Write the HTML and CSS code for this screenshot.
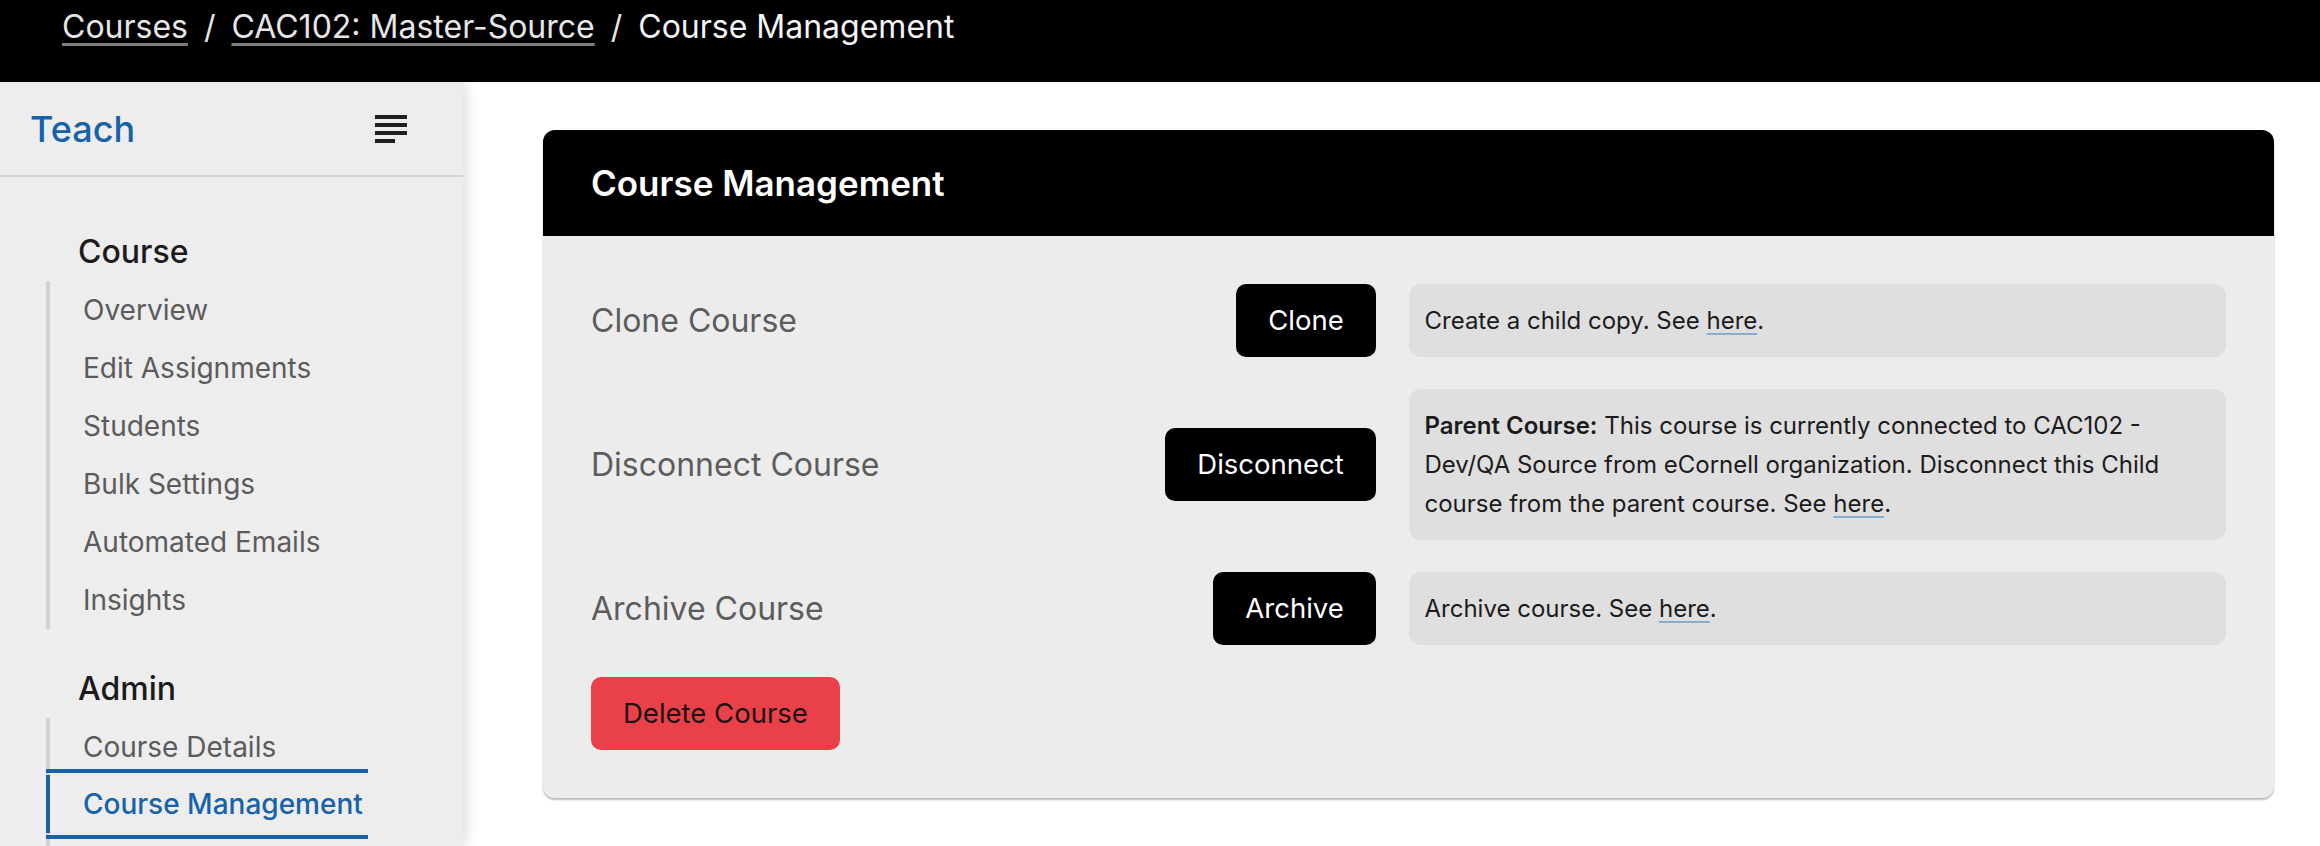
FILE: index.html
```html
<!DOCTYPE html>
<html lang="en">
<head>
<meta charset="utf-8">
<title>Course Management</title>
<link rel="stylesheet" href="styles.css">
</head>
<body>
<header class="topbar">
  <nav class="crumbs">
    <a href="#" class="crumb-link">Courses</a>
    <span class="sep">/</span>
    <a href="#" class="crumb-link">CAC102: Master-Source</a>
    <span class="sep">/</span>
    <span class="crumb-current">Course Management</span>
  </nav>
</header>
<div class="layout">
  <aside class="sidebar">
    <div class="side-head">
      <span class="brand">Teach</span>
      <button class="menu-btn" aria-label="Menu">
        <svg viewBox="0 0 24 24" width="48" height="48"><path fill="#1f1f1f" d="M14 17H4v2h10v-2zm6-8H4v2h16V9zM4 15h16v-2H4v2zM4 5v2h16V5H4z"/></svg>
      </button>
    </div>
    <nav class="side-nav">
      <section class="nav-group">
        <h3 class="nav-title">Course</h3>
        <ul class="nav-list">
          <li class="nav-item"><a href="#">Overview</a></li>
          <li class="nav-item"><a href="#">Edit Assignments</a></li>
          <li class="nav-item"><a href="#">Students</a></li>
          <li class="nav-item"><a href="#">Bulk Settings</a></li>
          <li class="nav-item"><a href="#">Automated Emails</a></li>
          <li class="nav-item"><a href="#">Insights</a></li>
        </ul>
      </section>
      <section class="nav-group">
        <h3 class="nav-title">Admin</h3>
        <ul class="nav-list nav-list-open">
          <li class="nav-item"><a href="#">Course Details</a></li>
          <li class="nav-item active"><a href="#">Course Management</a></li>
        </ul>
      </section>
    </nav>
  </aside>
  <main class="main">
    <div class="card">
      <div class="card-head">
        <h2 class="card-title">Course Management</h2>
      </div>
      <div class="card-body">
        <div class="row">
          <div class="row-main">
            <span class="row-label">Clone Course</span>
            <button class="btn btn-dark">Clone</button>
          </div>
          <div class="row-desc">Create a child copy. See <a href="#" class="help">here</a>.</div>
        </div>
        <div class="row">
          <div class="row-main">
            <span class="row-label">Disconnect Course</span>
            <button class="btn btn-dark">Disconnect</button>
          </div>
          <div class="row-desc"><strong>Parent Course:</strong> This course is currently connected to CAC102 - Dev/QA Source from eCornell organization. Disconnect this Child course from the parent course. See <a href="#" class="help">here</a>.</div>
        </div>
        <div class="row">
          <div class="row-main">
            <span class="row-label">Archive Course</span>
            <button class="btn btn-dark">Archive</button>
          </div>
          <div class="row-desc">Archive course. See <a href="#" class="help">here</a>.</div>
        </div>
        <div class="row-danger">
          <button class="btn btn-danger">Delete Course</button>
        </div>
      </div>
    </div>
  </main>
</div>
</body>
</html>
```

FILE: styles.css
```css
* { box-sizing: border-box; }
html, body { margin: 0; padding: 0; }
body {
  font-family: Inter, "Noto Sans", sans-serif;
  background: #ffffff;
  color: #1b1b1b;
  height: 846px;
  overflow: hidden;
}

.topbar {
  height: 82px;
  background: #000;
  padding: 9px 0 0 62px;
}
.crumbs {
  font-size: 32px;
  line-height: 36px;
  color: #f2f2f2;
  display: flex;
  align-items: baseline;
}
.crumb-link {
  color: #e6e6e6;
  text-decoration: underline;
  text-decoration-color: #7d7d7d;
  text-decoration-thickness: 2.5px;
  text-underline-offset: 5px;
}
.sep { margin: 0 16px; color: #e6e6e6; }
.crumb-current { color: #f5f5f5; }

.layout {
  display: flex;
  height: 764px;
  overflow: hidden;
}

.sidebar {
  width: 463px;
  flex: none;
  background: #ededed;
  box-shadow: 2px 0 14px rgba(0,0,0,0.16);
  position: relative;
  z-index: 1;
  overflow: hidden;
}
.side-head {
  height: 95px;
  border-bottom: 2px solid #d3d3d3;
  display: flex;
  align-items: center;
  justify-content: space-between;
  padding: 0 48px 0 30px;
}
.brand {
  font-size: 36px;
  font-weight: 500;
  color: #1762a8;
}
.menu-btn {
  border: 0;
  background: transparent;
  padding: 0;
  width: 48px;
  height: 48px;
  display: flex;
}

.side-nav { padding: 55px 0 0 46px; }
.nav-group + .nav-group { margin-top: 40px; }
.nav-title {
  margin: 0 0 9px 32px;
  font-size: 32px;
  line-height: 40px;
  font-weight: 500;
  color: #1b1b1b;
}
.nav-list {
  list-style: none;
  margin: 0;
  padding: 0;
  border-left: 4px solid #d2d2d2;
}
.nav-list-open { padding-bottom: 40px; }
.nav-item a {
  display: block;
  padding-left: 33px;
  font-size: 28px;
  line-height: 58px;
  color: #5b5b5b;
  text-decoration: none;
}
.nav-item.active {
  margin: -7px 0 0 -4px;
  width: fit-content;
  border-top: 4px solid #1762a8;
  border-bottom: 4px solid #1762a8;
  padding: 2px 0;
  background: linear-gradient(#d2d2d2, #d2d2d2) left top / 4px 100% no-repeat;
}
.nav-item.active a {
  border-left: 4px solid #1762a8;
  padding: 0 5px 0 33px;
  color: #1762a8;
  font-weight: 500;
}

.main {
  flex: 1;
  padding: 48px 46px 0 80px;
}
.card {
  background: #ececec;
  border-radius: 12px;
  box-shadow: 0 2px 2px rgba(0,0,0,0.28);
}
.card-head {
  background: #000;
  height: 106px;
  border-radius: 12px 12px 0 0;
  display: flex;
  align-items: center;
  padding: 0 48px;
}
.card-title {
  margin: 0;
  color: #fff;
  font-size: 35px;
  font-weight: 600;
}
.card-body {
  padding: 48px;
  display: flex;
  flex-direction: column;
  gap: 32px;
}
.row {
  display: flex;
  justify-content: space-between;
  align-items: center;
}
.row-main {
  width: 48%;
  display: flex;
  justify-content: space-between;
  align-items: center;
}
.row-label {
  font-size: 32px;
  color: #5c5c5c;
}
.row-desc {
  width: 50%;
  background: #dfdfdf;
  border-radius: 12px;
  padding: 17px 16px;
  font-size: 24px;
  line-height: 39px;
  color: #1b1b1b;
}
.row-desc strong { font-weight: 600; }
.help {
  color: #1b1b1b;
  text-decoration: underline;
  text-decoration-color: #8aaccd;
  text-decoration-thickness: 2px;
  text-underline-offset: 4px;
}
.btn {
  font-family: inherit;
  font-size: 27.5px;
  line-height: 39px;
  padding: 17px 32px;
  border: 0;
  border-radius: 10px;
}
.btn-dark { background: #000; color: #fff; }
.btn-danger { background: #ea4049; color: #1c1212; }
.row-danger { display: flex; }
```
